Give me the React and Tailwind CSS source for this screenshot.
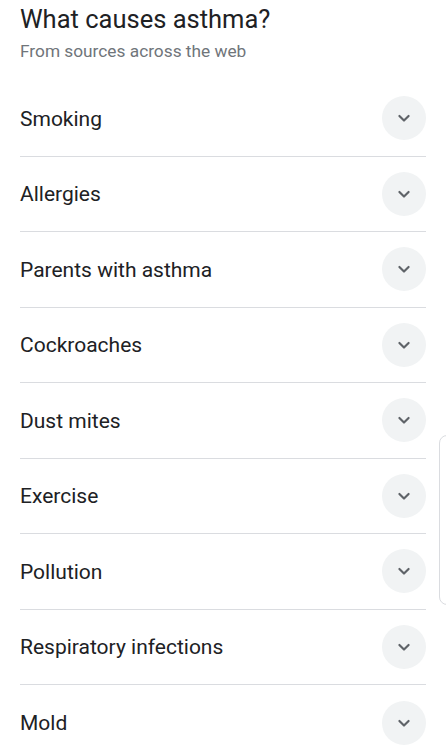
import React from "react";

const items = [
  "Smoking",
  "Allergies",
  "Parents with asthma",
  "Cockroaches",
  "Dust mites",
  "Exercise",
  "Pollution",
  "Respiratory infections",
  "Mold",
];

function Chevron() {
  return (
    <svg width="20" height="20" viewBox="0 0 24 24" fill="none">
      <path d="M6.5 9.5 L12 15 L17.5 9.5" stroke="#5f6368" strokeWidth="2.6" strokeLinecap="round" strokeLinejoin="round" />
    </svg>
  );
}

export default function App() {
  return (
    <div className="relative w-[446px] h-[750px] overflow-hidden bg-white" style={{ fontFamily: "Roboto, 'Open Sans', sans-serif" }}>
      <div className="px-5">
        <div className="pt-[2px]">
          <h1 className="text-[25.5px] leading-[34px] text-[#202124] font-normal">What causes asthma?</h1>
          <p className="text-[17.3px] leading-[20px] text-[#70757a] mt-[5px]">From sources across the web</p>
        </div>
        <div className="mt-[20px]">
          {items.map((t, i) => (
            <div key={t} className={`flex items-center justify-between h-[75.5px] ${i < items.length - 1 ? "border-b border-[#dadce0]" : ""}`}>
              <span className="text-[21px] text-[#202124] pt-[2px]">{t}</span>
              <div className="w-[44px] h-[44px] rounded-full bg-[#f1f3f4] flex items-center justify-center">
                <Chevron />
              </div>
            </div>
          ))}
        </div>
      </div>
      <div className="absolute left-[439px] top-[435px] w-[20px] h-[170px] rounded-[8px] border border-[#dadce0] bg-white" />
    </div>
  );
}
